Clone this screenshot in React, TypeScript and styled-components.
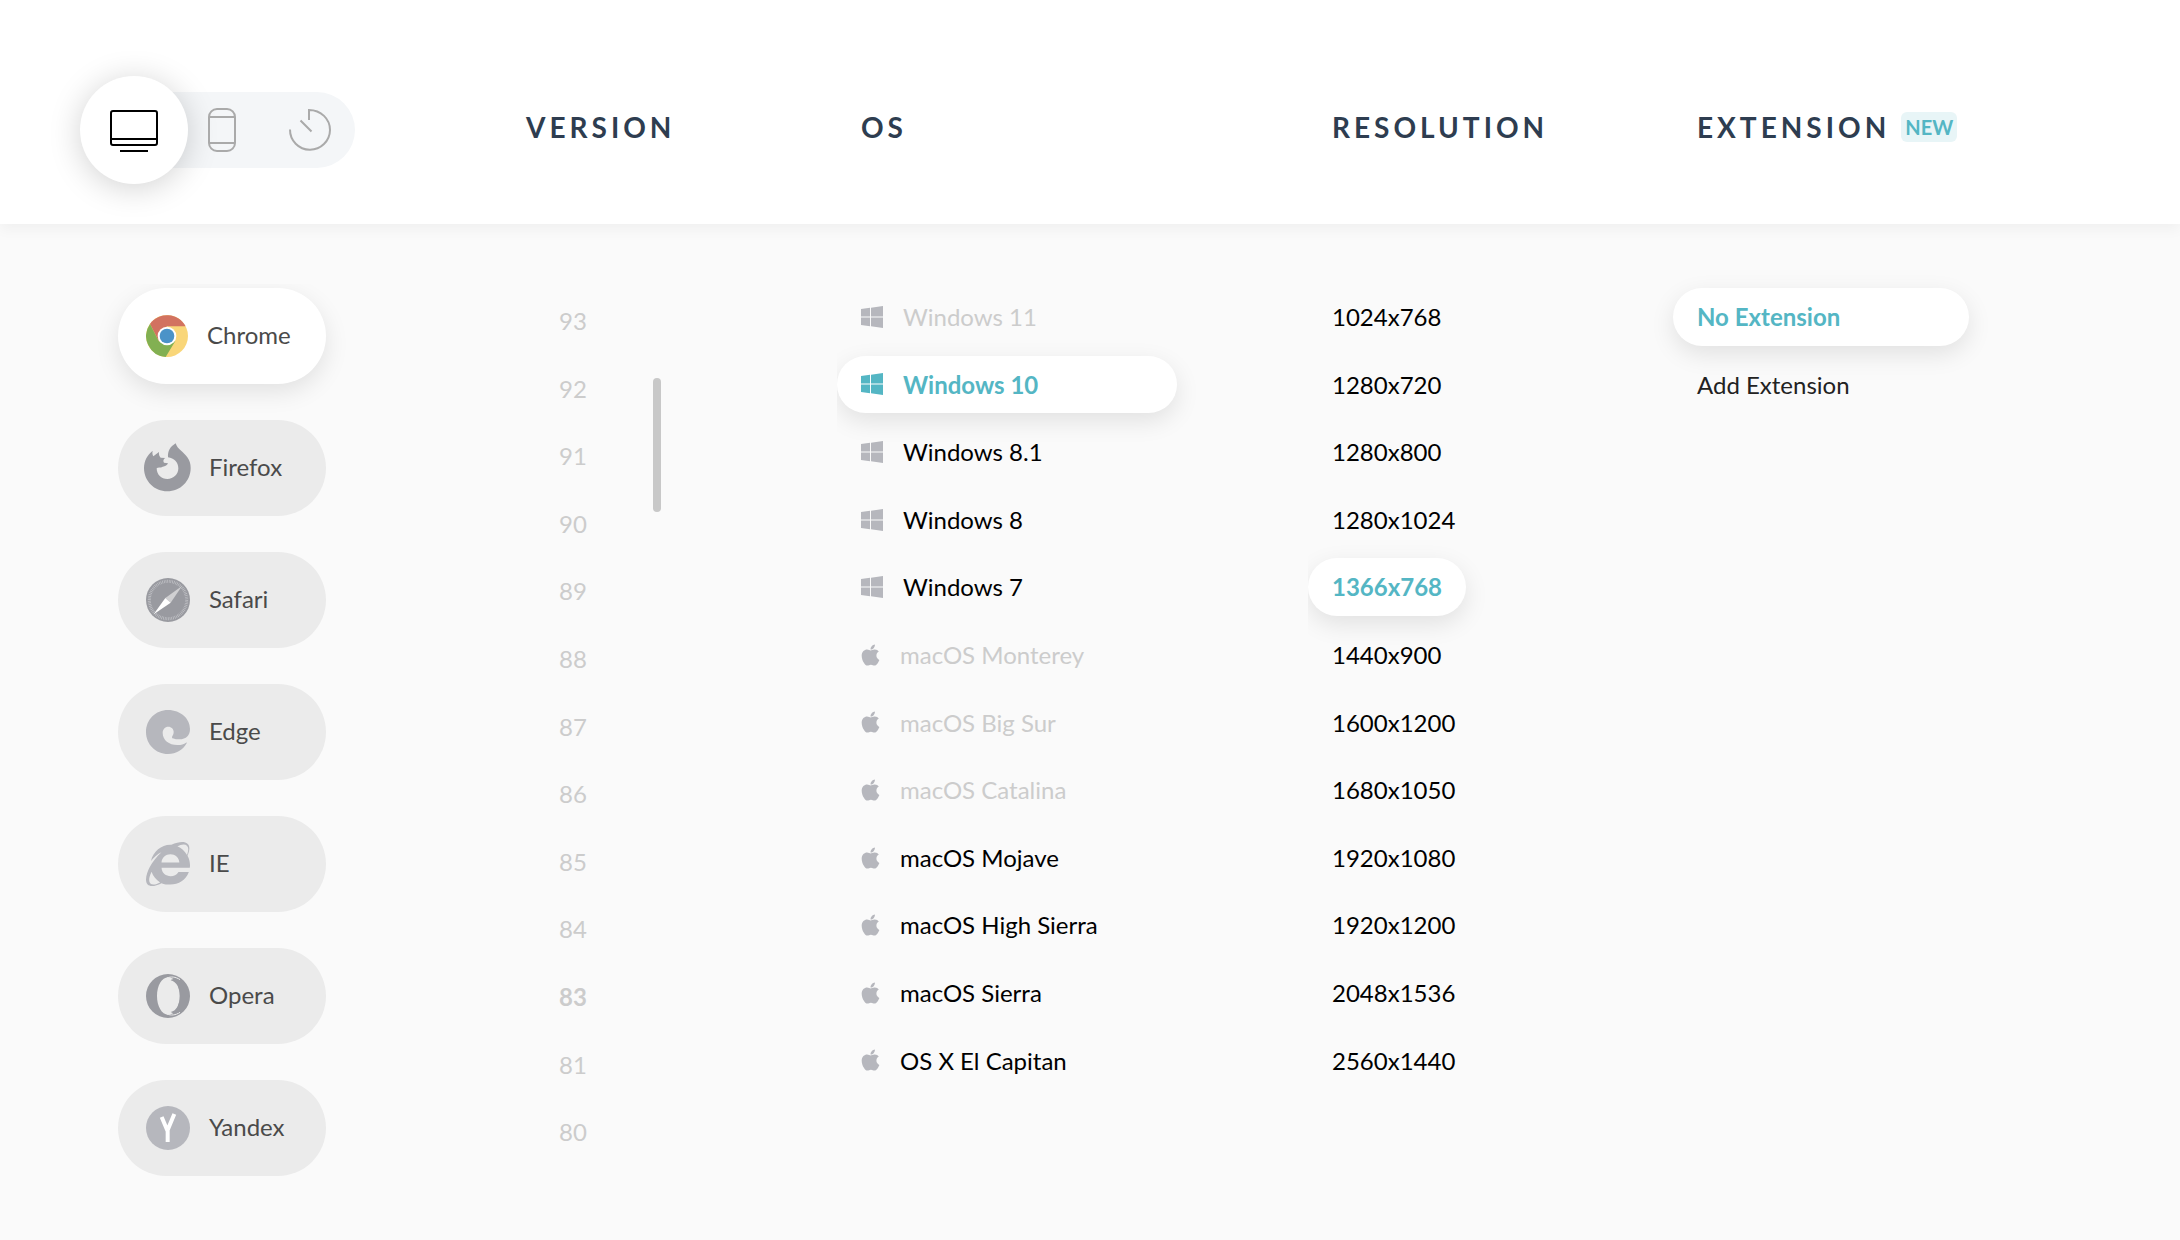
import React, { useState } from "react";
import styled, { createGlobalStyle, css } from "styled-components";
import { FaApple, FaInternetExplorer, FaWindows } from "react-icons/fa";

const color = {
  ink: "#2e3d50",
  accent: "#54b6c4",
  accentSoft: "#e8f5f7",
  page: "#fafafa",
  pill: "#ebebeb",
  track: "#f4f6f8",
  muted: "#cccccc",
  icon: "#b6b7bd",
  iconDark: "#999aa0",
  label: "#4a4a4a",
};

const GlobalStyle = createGlobalStyle`
  *, *::before, *::after { box-sizing: border-box; }
  body {
    margin: 0;
    background: ${color.page};
    color: #000;
    font-family: Lato, "Liberation Sans", sans-serif;
    font-size: 24px;
  }
  button {
    margin: 0;
    border: 0;
    background: none;
    font: inherit;
    color: inherit;
    text-align: left;
    cursor: pointer;
  }
  button:disabled { cursor: default; }
  svg { display: block; flex: none; }
`;

const columns = css`
  display: grid;
  grid-template-columns:
    minmax(0, 502fr) minmax(0, 335fr) minmax(0, 471fr)
    minmax(0, 365fr) minmax(0, 507fr);
`;

const Page = styled.div`
  min-height: 100vh;
`;

const Header = styled.header`
  ${columns}
  align-items: center;
  padding: 92px 0 56px;
  background: #fff;
  box-shadow: 0 6px 12px rgba(0, 0, 0, 0.04);
`;

const DeviceCell = styled.div`
  padding-left: 80px;
`;

const DeviceToggle = styled.div`
  display: inline-flex;
  align-items: center;
  height: 76px;
  border-radius: 38px;
  background: ${color.track};
  vertical-align: top;
`;

const DeviceButton = styled.button<{ $active?: boolean }>`
  display: flex;
  align-items: center;
  justify-content: center;
  height: 76px;
  padding: 0 20px;
  color: #aaa;

  &:last-child {
    padding: 0 24px 0 32px;
  }

  ${(p) =>
    p.$active &&
    css`
      width: 108px;
      height: 108px;
      margin: -16px 0;
      border-radius: 50%;
      background: #fff;
      color: #000;
      box-shadow: 0 4px 32px rgba(0, 0, 0, 0.18);
    `}
`;

const Heading = styled.h2`
  display: flex;
  align-items: center;
  gap: 11px;
  margin: 0;
  padding: 0 0 6px 24px;
  color: ${color.ink};
  font-size: 28px;
  font-weight: 700;
  line-height: 34px;
  letter-spacing: 4px;
`;

const Badge = styled.span`
  padding: 0 4px;
  border-radius: 6px;
  background: ${color.accentSoft};
  color: ${color.accent};
  font-size: 20px;
  line-height: 30px;
  letter-spacing: 0;
`;

const Content = styled.main`
  ${columns}
  align-items: start;
  padding: 60px 0 32px;
`;

const BrowserList = styled.div`
  display: flex;
  flex-direction: column;
  align-items: flex-start;
  gap: 36px;
  padding: 4px 0 32px 118px;
  overflow: hidden;
`;

const BrowserButton = styled.button<{ $active: boolean }>`
  display: flex;
  align-items: center;
  gap: 19px;
  width: 208px;
  height: 96px;
  padding: 0 28px;
  border-radius: 48px;
  background: ${(p) => (p.$active ? "#fff" : color.pill)};
  box-shadow: ${(p) => (p.$active ? "0 8px 24px rgba(0, 0, 0, 0.1)" : "none")};
  color: ${color.label};
`;

const BrowserName = styled.span`
  padding-bottom: 2px;
  line-height: 28px;
`;

const VersionPane = styled.div`
  display: flex;
  justify-content: space-between;
  padding: 4px 176px 0 33px;
`;

const ScrollThumb = styled.div`
  width: 8px;
  height: 134px;
  margin-top: 90px;
  border-radius: 4px;
  background: #c8c8c8;
`;

const OptionList = styled.div<{ $clipped?: boolean }>`
  display: flex;
  flex-direction: column;
  align-items: flex-start;
  gap: 10px;
  padding: 4px 32px 32px 0;
  overflow: ${(p) => (p.$clipped ? "hidden" : "visible")};
`;

const Option = styled.button<{ $active?: boolean; $wide?: number; $bold?: boolean }>`
  display: flex;
  align-items: center;
  gap: 20px;
  width: ${(p) => (p.$wide ? `${p.$wide}px` : "auto")};
  padding: 12px 24px;
  border-radius: 29px;
  line-height: 1.4;
  white-space: nowrap;

  svg {
    color: ${color.icon};
  }

  &:disabled {
    color: ${color.muted};
    font-weight: ${(p) => (p.$bold ? 700 : 400)};
  }

  ${(p) =>
    p.$active &&
    css`
      background: #fff;
      box-shadow: 0 8px 24px rgba(0, 0, 0, 0.1);
      font-weight: 700;

      &, svg {
        color: ${color.accent};
      }
    `}
`;

const DesktopIcon = () => (
  <svg width="48" height="44" viewBox="0 0 48 44" fill="none" stroke="currentColor" strokeWidth="2" aria-hidden="true">
    <rect x="1" y="3" width="46" height="34" rx="2" />
    <path d="M1 31H47M10 43H38" />
  </svg>
);

const PhoneIcon = () => (
  <svg width="28" height="44" viewBox="0 0 28 44" fill="none" stroke="currentColor" strokeWidth="2" aria-hidden="true">
    <rect x="1" y="1" width="26" height="42" rx="8" />
    <path d="M1 9H27M1 35H27" />
  </svg>
);

const TimerIcon = () => (
  <svg width="43" height="44" viewBox="0 0 43 44" fill="none" stroke="currentColor" strokeWidth="2" aria-hidden="true">
    <path d="M21 12V2C33 2 42 11 42 22A20 20 0 1 1 2 21.5M12.500 12.500L23.500 23.500" />
  </svg>
);

const ChromeIcon = () => (
  <svg width="42" height="42" viewBox="0 0 126 126" aria-hidden="true">
    <circle cx="63" cy="63" r="63" fill="#f9d679" />
    <path d="M12 27A63 63 0 0 1 119 34H63L38 78Z" fill="#d27260" />
    <path d="M12 27A63 63 0 0 0 59 126L88 78L63 90L38 78Z" fill="#82b052" />
    <circle cx="63" cy="63" r="28" fill="#fff" />
    <circle cx="63" cy="63" r="22" fill="#4b93c8" />
  </svg>
);

const FirefoxIcon = () => (
  <svg width="44" height="44" viewBox="138 530 132 132" overflow="visible" fill={color.iconDark} aria-hidden="true">
    <path d="M158 544C156 552 158 557 160 561L177 548C176 555 178 561 182 565L196 566C191 569 188 574 192 580L204 582C202 588 196 591 188 592C182 596 173 593 170 597C170 616 184 629 202 629C221 629 235 615 235 597C235 579 222 566 204 564C203 545 210 533 227 522C232 540 250 546 262 564C269 574 272 584 272 596C272 635 241 666 202 666C163 666 132 635 132 596C132 574 142 557 158 544Z" />
  </svg>
);

const SafariIcon = () => (
  <svg width="44" height="44" viewBox="0 0 132 132" aria-hidden="true">
    <circle cx="66" cy="66" r="66" fill={color.iconDark} />
    <circle cx="66" cy="66" r="56" fill="none" stroke="#c3c4c8" strokeWidth="9" strokeDasharray="2 3" />
    <path d="M108 24L74 74L58 60Z" fill="#d0d0d2" />
    <path d="M23 109L58 60L74 74Z" fill="#fff" />
  </svg>
);

const EdgeIcon = () => (
  <svg width="44" height="44" viewBox="138 540 132 132" fill={color.icon} aria-hidden="true">
    <path d="M260 640C249 660 229 672 204 672C167 672 138 643 138 606C138 569 167 540 204 540C243 540 270 567 270 597C270 616 259 628 238 628C223 628 216 627 216 622C216 618 221 615 221 606C221 597 214 590 205 590C195 590 188 598 188 608C188 630 207 645 232 645C244 645 252 642 258 638C260 637 261 638 260 640Z" />
  </svg>
);

const OperaIcon = () => (
  <svg width="44" height="44" viewBox="0 0 132 132" aria-hidden="true">
    <path
      fill={color.iconDark}
      fillRule="evenodd"
      d="M66 0A66 66 0 1 1 66 132A66 66 0 1 1 66 0ZM67 10C47 10 33 36 33 66C33 96 47 122 67 122C88 122 101 96 101 66C101 36 88 10 67 10Z"
    />
    <path
      d="M62 12C76 7 88 8 102 17M62 120C76 125 88 124 102 115"
      fill="none"
      stroke={color.pill}
      strokeWidth="3"
    />
    <path
      fill={color.iconDark}
      d="M74 19C82 13 92 13 101 19V113C92 119 82 119 74 114C92 111 101 90 101 66C101 42 92 23 74 19Z"
    />
  </svg>
);

const YandexIcon = () => (
  <svg width="44" height="44" viewBox="0 0 132 132" aria-hidden="true">
    <circle cx="66" cy="66" r="66" fill={color.icon} />
    <path d="M47 33L65 76M85 24L65 72V108" fill="none" stroke="#fff" strokeWidth="12" />
  </svg>
);

const ExplorerIcon = () => <FaInternetExplorer size={44} color={color.icon} aria-hidden="true" />;

const browsers = [
  { name: "Chrome", Icon: ChromeIcon },
  { name: "Firefox", Icon: FirefoxIcon },
  { name: "Safari", Icon: SafariIcon },
  { name: "Edge", Icon: EdgeIcon },
  { name: "IE", Icon: ExplorerIcon },
  { name: "Opera", Icon: OperaIcon },
  { name: "Yandex", Icon: YandexIcon },
];

const versions = [93, 92, 91, 90, 89, 88, 87, 86, 85, 84, 83, 81, 80];

const systems = [
  { name: "Windows 11", disabled: true },
  { name: "Windows 10" },
  { name: "Windows 8.1" },
  { name: "Windows 8" },
  { name: "Windows 7" },
  { name: "macOS Monterey", disabled: true },
  { name: "macOS Big Sur", disabled: true },
  { name: "macOS Catalina", disabled: true },
  { name: "macOS Mojave" },
  { name: "macOS High Sierra" },
  { name: "macOS Sierra" },
  { name: "OS X El Capitan" },
];

const resolutions = [
  "1024x768", "1280x720", "1280x800", "1280x1024", "1366x768", "1440x900",
  "1600x1200", "1680x1050", "1920x1080", "1920x1200", "2048x1536", "2560x1440",
];

const WindowsGlyph = styled(FaWindows)`
  width: 22px;
  height: 26px;
`;

const AppleGlyph = styled(FaApple)`
  width: 19px;
  height: 24px;
`;

const PlainOption = styled(Option)`
  color: ${(p) => (p.$active ? color.accent : "#222")};
`;

export default function App() {
  const [browser, setBrowser] = useState("Chrome");
  const [system, setSystem] = useState("Windows 10");
  const [resolution, setResolution] = useState("1366x768");
  const [extension, setExtension] = useState("No Extension");

  return (
    <Page>
      <GlobalStyle />
      <Header>
        <DeviceCell>
          <DeviceToggle>
            <DeviceButton $active aria-label="Desktop"><DesktopIcon /></DeviceButton>
            <DeviceButton aria-label="Mobile"><PhoneIcon /></DeviceButton>
            <DeviceButton aria-label="Recent"><TimerIcon /></DeviceButton>
          </DeviceToggle>
        </DeviceCell>
        <Heading>VERSION</Heading>
        <Heading>OS</Heading>
        <Heading>RESOLUTION</Heading>
        <Heading>EXTENSION <Badge>NEW</Badge></Heading>
      </Header>
      <Content>
        <BrowserList>
          {browsers.map(({ name, Icon }) => (
            <BrowserButton
              key={name}
              $active={name === browser}
              aria-pressed={name === browser}
              onClick={() => setBrowser(name)}
            >
              <Icon />
              <BrowserName>{name}</BrowserName>
            </BrowserButton>
          ))}
        </BrowserList>
        <VersionPane>
          <OptionList $clipped>
            {versions.map((v) => (
              <Option key={v} disabled $bold={v === 83}>{v}</Option>
            ))}
          </OptionList>
          <ScrollThumb />
        </VersionPane>
        <OptionList $clipped>
          {systems.map(({ name, disabled }) => (
            <Option
              key={name}
              $wide={340}
              $active={name === system}
              disabled={disabled}
              aria-pressed={name === system}
              onClick={() => setSystem(name)}
            >
              {name.startsWith("Windows") ? <WindowsGlyph aria-hidden="true" /> : <AppleGlyph aria-hidden="true" />}
              {name}
            </Option>
          ))}
        </OptionList>
        <OptionList $clipped>
          {resolutions.map((r) => (
            <Option key={r} $active={r === resolution} aria-pressed={r === resolution} onClick={() => setResolution(r)}>
              {r}
            </Option>
          ))}
        </OptionList>
        <OptionList>
          {["No Extension", "Add Extension"].map((e) => (
            <PlainOption
              key={e}
              $wide={296}
              $active={e === extension}
              aria-pressed={e === extension}
              onClick={() => setExtension(e)}
            >
              {e}
            </PlainOption>
          ))}
        </OptionList>
      </Content>
    </Page>
  );
}
